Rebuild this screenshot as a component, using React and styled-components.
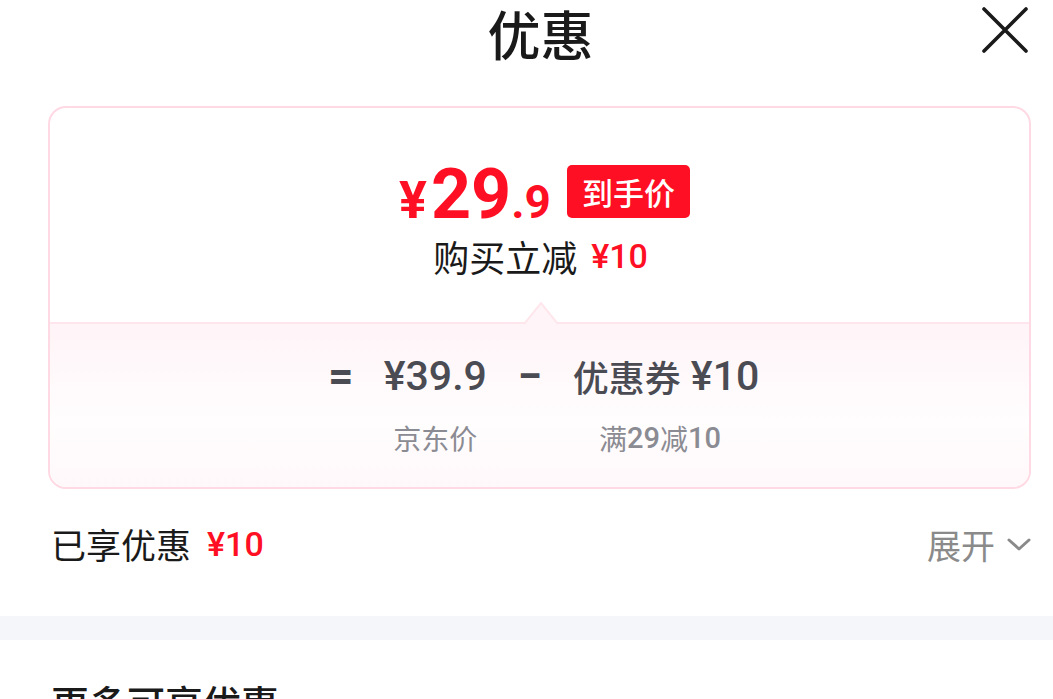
import React from "react";
import styled, { createGlobalStyle } from "styled-components";

const Global = createGlobalStyle`
  html, body { margin: 0; padding: 0; background: #fff; }
  body { font-family: Roboto, "Noto Sans CJK SC", sans-serif; overflow: hidden; }
  * { box-sizing: border-box; }
`;

const Page = styled.div`
  width: 1053px;
  height: 699px;
  overflow: hidden;
  background: #fff;
  display: flex;
  flex-direction: column;
  & > * { flex-shrink: 0; }
`;

const Header = styled.div`
  position: relative;
  height: 106px;
  display: flex;
  justify-content: center;
  align-items: flex-start;
  padding-left: 28px;
`;

const Title = styled.h1`
  margin: 0;
  font-family: "Noto Sans CJK SC", sans-serif;
  font-size: 53px;
  font-weight: 500;
  line-height: 66px;
  color: #1a1a1a;
`;

const Close = styled.button`
  position: absolute;
  right: 24px;
  top: 6px;
  width: 48px;
  height: 48px;
  border: 0;
  background: none;
  padding: 0;
`;

const Card = styled.div`
  margin: 0 22px 0 48px;
  height: 383px;
  border: 2px solid #ffd9e3;
  border-radius: 18px;
  overflow: hidden;
  display: flex;
  flex-direction: column;
`;

const Top = styled.div`
  height: 214px;
  flex-shrink: 0;
  display: flex;
  flex-direction: column;
  align-items: center;
  padding-top: 56px;
  position: relative;
`;

const PriceRow = styled.div`
  display: flex;
  align-items: center;
  gap: 16px;
  height: 54px;
  padding-left: 10px;
`;

const Price = styled.div`
  display: flex;
  align-items: baseline;
  color: #ff0f23;
  font-family: Roboto, sans-serif;
  font-weight: 700;
  line-height: 1;
  margin-top: 6px;
`;

const Yen = styled.span`
  font-size: ${(p) => p.$size}px;
  margin-right: ${(p) => p.$gap || 0}px;
`;

const Badge = styled.span`
  background: #ff0f23;
  color: #fff;
  border-radius: 5px;
  font-family: "Noto Sans CJK SC", sans-serif;
  font-weight: 500;
  font-size: 31px;
  line-height: 53px;
  height: 53px;
  padding: 0 15px;
`;

const Reduce = styled.div`
  margin-top: 18px;
  display: flex;
  align-items: center;
  gap: 14px;
  font-size: 36px;
  line-height: 40px;
  color: #1a1a1a;
  font-family: "Noto Sans CJK SC", sans-serif;
  font-weight: 400;
  padding-left: 2px;
`;

const Red = styled.span`
  color: #ff0f23;
  font-family: Roboto, "Noto Sans CJK SC", sans-serif;
  font-weight: 500;
  font-size: ${(p) => p.$size || 34}px;
`;

const Notch = styled.svg`
  position: absolute;
  left: 474px;
  bottom: -3px;
`;

const Bottom = styled.div`
  flex: 1;
  border-top: 2px solid #ffe6ec;
  background: linear-gradient(#fff4f7, #fffdfd 60%, #fff8fa);
  display: flex;
  justify-content: center;
  padding-top: 27px;
  padding-left: 8px;
`;

const Formula = styled.div`
  display: flex;
  align-items: flex-start;
  gap: 30px;
`;

const Col = styled.div`
  display: flex;
  flex-direction: column;
  align-items: center;
`;

const Main = styled.div`
  font-family: "Noto Sans CJK SC", sans-serif;
  font-size: 36px;
  line-height: 50px;
  font-weight: 500;
  color: #4a4b53;
  white-space: pre;
  display: flex;
  align-items: center;
  gap: 10px;
`;

const Num = styled.span`
  font-family: Roboto, sans-serif;
  font-size: 41px;
  font-weight: 500;
`;

const Op = styled.span`
  font-family: Roboto, sans-serif;
  font-size: 44px;
  font-weight: 700;
  color: #4a4b53;
  line-height: 50px;
  width: 26px;
  text-align: center;
`;

const Sub = styled.div`
  margin-top: 19px;
  margin-right: ${(p) => p.$shift || 0}px;
  font-size: 28px;
  line-height: 36px;
  color: #8b8b93;
  font-family: "Noto Sans CJK SC", sans-serif;
  display: flex;
  align-items: center;
`;

const SubNum = styled.span`
  font-family: Roboto, sans-serif;
  font-weight: 500;
  font-size: 29px;
`;

const Row = styled.div`
  height: 127px;
  display: flex;
  align-items: center;
  justify-content: space-between;
  padding: 0 22px 0 51px;
`;

const Label = styled.div`
  font-family: "Noto Sans CJK SC", sans-serif;
  font-size: 35px;
  color: #1a1a1a;
  display: flex;
  align-items: center;
  gap: 16px;
  margin-top: -18px;
`;

const Expand = styled.div`
  display: flex;
  align-items: center;
  gap: 12px;
  color: #8a8a8a;
  font-family: "Noto Sans CJK SC", sans-serif;
  font-size: 34px;
  margin-top: -16px;
`;

const Band = styled.div`
  height: 24px;
  background: #f5f6fa;
`;

const More = styled.div`
  padding: 34px 0 0 51px;
  font-family: "Noto Sans CJK SC", sans-serif;
  font-size: 38px;
  font-weight: 500;
  color: #1a1a1a;
`;

export default function App() {
  return (
    <Page>
      <Global />
      <Header>
        <Title>优惠</Title>
        <Close aria-label="close">
          <svg width="48" height="48" viewBox="0 0 48 48">
            <path d="M3 3 L45 45 M45 3 L3 45" stroke="#1a1a1a" strokeWidth="3.6" strokeLinecap="round" />
          </svg>
        </Close>
      </Header>
      <Card>
        <Top>
          <PriceRow>
            <Price>
              <Yen $size={52} $gap={4}>¥</Yen>
              <Yen $size={70}>29</Yen>
              <Yen $size={46}>.9</Yen>
            </Price>
            <Badge>到手价</Badge>
          </PriceRow>
          <Reduce>
            <span>购买立减</span>
            <Red>¥10</Red>
          </Reduce>
          <Notch width="34" height="25" viewBox="0 0 34 25">
            <path d="M0 24 L17 3 L34 24" fill="#fff4f7" stroke="#ffe6ec" strokeWidth="2" />
          </Notch>
        </Top>
        <Bottom>
          <Formula>
            <Op>=</Op>
            <Col>
              <Main><Num>¥39.9</Num></Main>
              <Sub>京东价</Sub>
            </Col>
            <Op>−</Op>
            <Col>
              <Main>
                <span>优惠券</span>
                <Num>¥10</Num>
              </Main>
              <Sub $shift={12}>
                满<SubNum>29</SubNum>减<SubNum>10</SubNum>
              </Sub>
            </Col>
          </Formula>
        </Bottom>
      </Card>
      <Row>
        <Label>
          <span>已享优惠</span>
          <Red>¥10</Red>
        </Label>
        <Expand>
          <span>展开</span>
          <svg width="24" height="16" viewBox="0 0 24 16">
            <path d="M2 3 L12 12 L22 3" fill="none" stroke="#8a8a8a" strokeWidth="3" strokeLinecap="round" strokeLinejoin="round" />
          </svg>
        </Expand>
      </Row>
      <Band />
      <More>更多可享优惠</More>
    </Page>
  );
}
